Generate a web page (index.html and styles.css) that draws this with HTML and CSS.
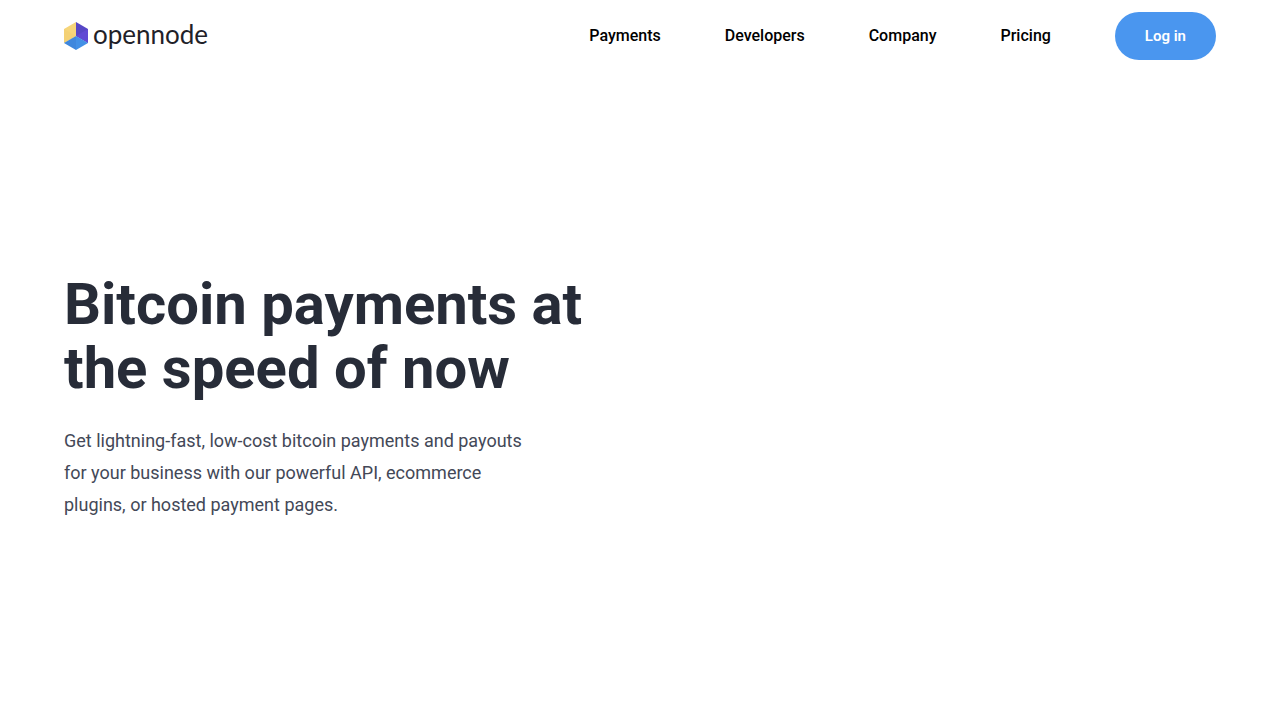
FILE: index.html
```html
<!DOCTYPE html>
<html lang="en">
<head>
<meta charset="utf-8">
<meta name="viewport" content="width=device-width, initial-scale=1">
<title>OpenNode</title>
<link rel="stylesheet" href="styles.css">
</head>
<body>
<header class="header">
  <a class="logo" href="#">
    <svg class="logo-mark" viewBox="0 0 24 28" aria-hidden="true">
      <path fill="#f6d57a" d="M12 0v14L0 21V7z"/>
      <path fill="#5747c6" d="M12 0l12 7v14l-12-7z"/>
      <path fill="#604ad4" d="M24 7v14l-12-7z"/>
      <path fill="#f4d175" d="M0 7l12 7-12 7z"/>
      <path fill="#3f87dd" d="M0 21l12-7v14z"/>
      <path fill="#4390e6" d="M12 14l12 7-12 7z"/>
    </svg>
    <span class="logo-name">opennode</span>
  </a>
  <nav class="nav">
    <a class="nav-link" href="#">Payments</a>
    <a class="nav-link" href="#">Developers</a>
    <a class="nav-link" href="#">Company</a>
    <a class="nav-link" href="#">Pricing</a>
    <a class="login" href="#">Log in</a>
  </nav>
</header>
<main class="hero">
  <div class="hero-copy">
    <h1 class="hero-title">Bitcoin payments at the speed of now</h1>
    <p class="hero-text">Get lightning-fast, low-cost bitcoin payments and payouts for your business with our powerful API, ecommerce plugins, or hosted payment pages.</p>
  </div>
</main>
</body>
</html>
```
FILE: styles.css
```css
* { box-sizing: border-box; }
body {
  margin: 0;
  min-height: 100vh;
  display: flex;
  flex-direction: column;
  background: #fff;
  font-family: Roboto, "Liberation Sans", sans-serif;
}
a { text-decoration: none; }
.header {
  display: flex;
  align-items: center;
  justify-content: space-between;
  padding: 12px 64px;
}
.logo {
  display: flex;
  align-items: center;
  gap: 5px;
  color: #1f2128;
}
.logo-mark { width: 24px; height: 28px; }
.logo-name {
  font-family: Lato, sans-serif;
  font-size: 26px;
  line-height: 28px;
  padding-bottom: 5px;
}
.nav {
  display: flex;
  align-items: center;
  gap: 64px;
}
.nav-link {
  color: #000;
  font-size: 16px;
  font-weight: 500;
  line-height: 24px;
}
.login {
  padding: 12px 30px;
  border-radius: 24px;
  background: #4a96ef;
  color: #fff;
  font-size: 15px;
  font-weight: 600;
  line-height: 24px;
}
.hero {
  flex: 1;
  display: flex;
  align-items: center;
  padding: 1px 64px 0;
}
.hero-copy { max-width: 544px; }
.hero-title {
  margin: 0 0 25px;
  color: #272c38;
  font-size: 58px;
  font-weight: 700;
  line-height: 64px;
}
.hero-text {
  margin: 0;
  max-width: 480px;
  color: #434857;
  font-size: 18px;
  line-height: 32px;
}
```
